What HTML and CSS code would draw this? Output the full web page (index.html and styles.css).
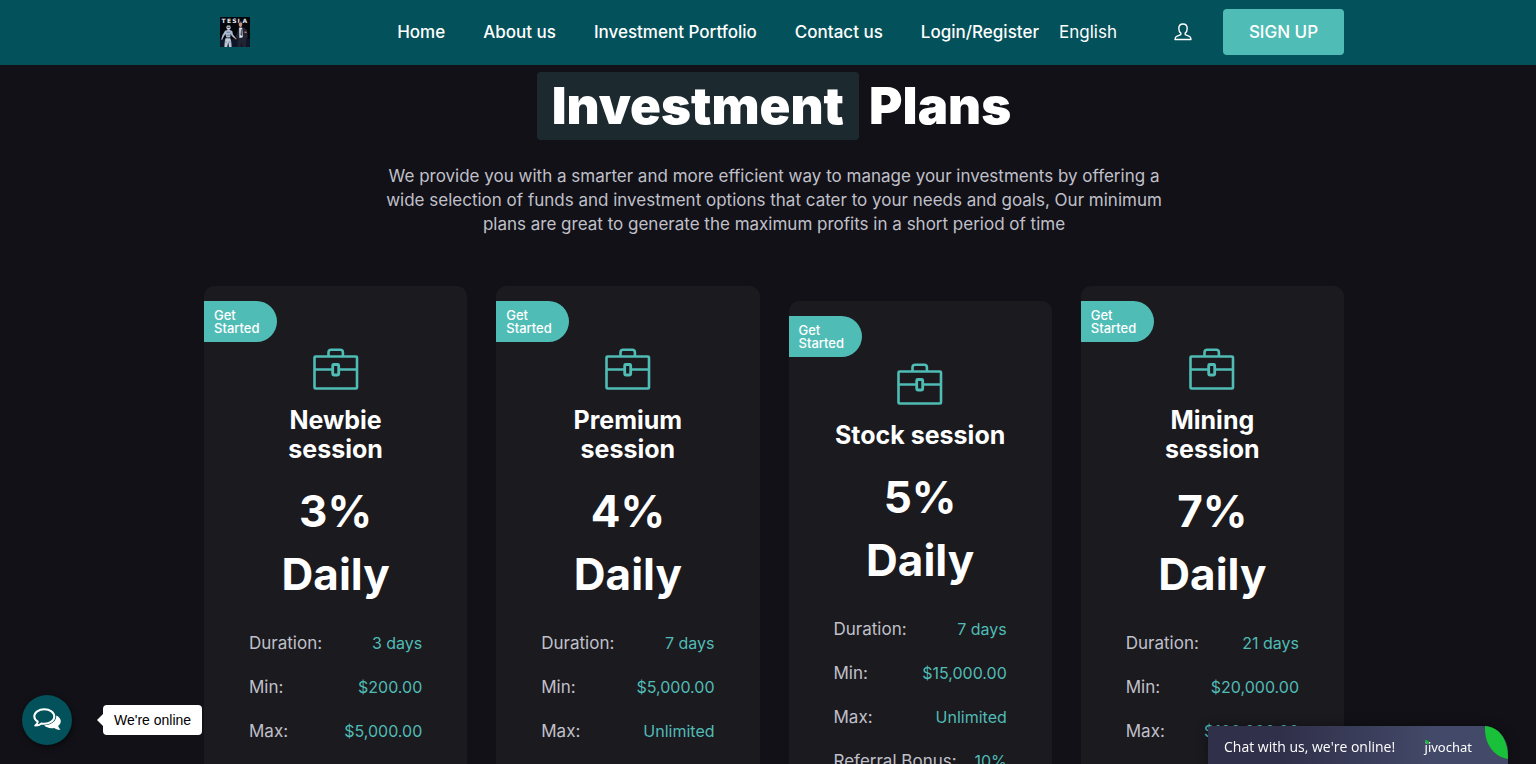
FILE: index.html
```html
<!DOCTYPE html>
<html lang="en">
<head>
<meta charset="utf-8">
<meta name="viewport" content="width=device-width, initial-scale=1">
<title>Investment Plans</title>
<link rel="stylesheet" href="styles.css">
</head>
<body>
<svg class="sprite" aria-hidden="true">
  <symbol id="briefcase" viewBox="0 0 46 42">
    <g fill="none" stroke="currentColor" stroke-width="2.6" stroke-linejoin="round">
      <rect x="1.500" y="8.500" width="42.500" height="32" rx="1"/>
      <path d="M15.500 8V4.500q0-2.700 2.700-2.700h9q2.700 0 2.700 2.700V8M2 21.500h17.500M26 21.500H44"/>
      <path d="M20.700 16.500h4q1 0 1 1v8.500q0 1-1 1h-4q-1 0-1-1v-8.500q0-1 1-1z" stroke-width="2.800"/>
    </g>
  </symbol>
</svg>

<header class="site-header">
  <div class="container header-row">
    <a class="logo" href="#" aria-label="Tesla">
      <svg viewBox="0 0 30 30" width="30" height="30" aria-hidden="true">
        <rect width="30" height="30" fill="#05060b"/>
        <path d="M0 22h30v8H0z" fill="#10162a"/>
        <text class="logo-word" x="1.5 7 12.3 17.6 22.6" y="5.5">TESLA</text>
        <path d="M7.2 8.4h2.6l.9 1.600-.5 2.200-1.600.8-1.700-.8-.6-2.200z" fill="#cbd5e2"/>
        <path d="M7.400 9.600h2.300v1.300H7.400z" fill="#343f52"/>
        <path d="M5 13.800l2.400-.8h2.400l2.400.9.8 3.600 2.400 3.100-1 1-3-3-.8-2-.3 3.800-4 .1-.9-3.600-1.800 3L2 23l-.8-.8 1.200-4z" fill="#aab9cf"/>
        <path d="M5.500 21.300h4.800l1 3.600.3 5.100H9l-.8-5.100-1 5.100H4.400l.3-5z" fill="#bdc9d9"/>
        <path d="M6.600 15.300h3.500M6.400 18.300h3.400M5.200 25h1.600M9 25h1.700" stroke="#56657d" stroke-width=".7"/>
        <path d="M18.400 11l3-1 3.200 1 2.400 2 .8 7-1.400 2.600-.5 7.400h-3.400l-.9-5-1 5h-3l.2-8.500-2-1.200z" fill="#202331"/>
        <path d="M19.200 10.600l3 .1.600 9.600-3.400.7z" fill="#e2e7ef"/>
        <path d="M20.900 12h.6l.3 6-.6 1-.6-1z" fill="#171b2b"/>
        <path d="M18.700 5.500l1.300-.9 1.800.4.5 1.900-.6 2.500-1.400.8-1.400-1.400z" fill="#c59482"/>
        <path d="M18.200 5.900l1.300-1.300 2.200.1.900 1.300-2-.4z" fill="#392a2b"/>
        <path d="M24.500 14.400l2.300.4-.2 1.200-2.100.1zM15 20.600l1.500.4-.2 1.500-1.500-.5z" fill="#bd806e"/>
      </svg>
    </a>
    <nav class="nav" aria-label="Main">
      <a href="#">Home</a>
      <a href="#">About us</a>
      <a href="#">Investment Portfolio</a>
      <a href="#">Contact us</a>
      <a href="#">Login/Register</a>
    </nav>
    <select class="language" aria-label="Language"><option>English</option></select>
    <a class="account" href="#" aria-label="My account">
      <svg viewBox="0 0 18 18" width="18" height="18" aria-hidden="true">
        <path d="M9 1C6.300 1 4.800 2.900 4.800 5.500c0 2 .8 3.700 2 4.600v1.500L2.600 13.300C1.600 13.700 1.200 14.500 1 16.500h16c-.2-2-.6-2.800-1.600-3.200l-4.200-1.700v-1.500c1.200-.9 2-2.600 2-4.600C13.200 2.900 11.700 1 9 1z" fill="none" stroke="currentColor" stroke-width="1.400" stroke-linejoin="round"/>
      </svg>
    </a>
    <a class="signup" href="#">SIGN UP</a>
  </div>
</header>

<main class="container">
  <section class="intro">
    <h1><span class="mark">Investment</span> Plans</h1>
    <p>We provide you with a smarter and more efficient way to manage your investments by offering a wide selection of funds and investment options that cater to your needs and goals, Our minimum plans are great to generate the maximum profits in a short period of time</p>
  </section>

  <section class="plans" aria-label="Plans">
    <article class="plan">
      <a class="ribbon" href="#">Get Started</a>
      <svg class="plan-icon" aria-hidden="true"><use href="#briefcase"/></svg>
      <h2>Newbie session</h2>
      <p class="rate">3% Daily</p>
      <dl>
        <div><dt>Duration:</dt><dd>3 days</dd></div>
        <div><dt>Min:</dt><dd>$200.00</dd></div>
        <div><dt>Max:</dt><dd>$5,000.00</dd></div>
        <div><dt>Referral Bonus:</dt><dd>10%</dd></div>
      </dl>
    </article>
    <article class="plan">
      <a class="ribbon" href="#">Get Started</a>
      <svg class="plan-icon" aria-hidden="true"><use href="#briefcase"/></svg>
      <h2>Premium session</h2>
      <p class="rate">4% Daily</p>
      <dl>
        <div><dt>Duration:</dt><dd>7 days</dd></div>
        <div><dt>Min:</dt><dd>$5,000.00</dd></div>
        <div><dt>Max:</dt><dd>Unlimited</dd></div>
        <div><dt>Referral Bonus:</dt><dd>10%</dd></div>
      </dl>
    </article>
    <article class="plan">
      <a class="ribbon" href="#">Get Started</a>
      <svg class="plan-icon" aria-hidden="true"><use href="#briefcase"/></svg>
      <h2>Stock session</h2>
      <p class="rate">5% Daily</p>
      <dl>
        <div><dt>Duration:</dt><dd>7 days</dd></div>
        <div><dt>Min:</dt><dd>$15,000.00</dd></div>
        <div><dt>Max:</dt><dd>Unlimited</dd></div>
        <div><dt>Referral Bonus:</dt><dd>10%</dd></div>
      </dl>
    </article>
    <article class="plan">
      <a class="ribbon" href="#">Get Started</a>
      <svg class="plan-icon" aria-hidden="true"><use href="#briefcase"/></svg>
      <h2>Mining session</h2>
      <p class="rate">7% Daily</p>
      <dl>
        <div><dt>Duration:</dt><dd>21 days</dd></div>
        <div><dt>Min:</dt><dd>$20,000.00</dd></div>
        <div><dt>Max:</dt><dd>$100,000.00</dd></div>
        <div><dt>Referral Bonus:</dt><dd>10%</dd></div>
      </dl>
    </article>
  </section>
</main>

<div class="online">
  <button class="online-button" type="button" aria-label="Open chat">
    <svg viewBox="0 0 28 24" width="28" height="24" aria-hidden="true">
      <path d="M23.300 7.500c2.700 1.300 4.500 3.300 4.500 5.700 0 1.800-1 3.400-2.600 4.600.2 1.600 1 2.600 2.500 3.800-2.700.3-4.700-.4-6.400-1.700-4.200.9-8.100-.3-10.300-2.600 6.700-.2 12.400-3.800 12.300-9.800z" fill="currentColor"/>
      <path d="M11.300 1.300c5.600 0 10 3.200 10 7.200s-4.400 7.200-10 7.200c-1 0-2-.1-2.900-.3-1.700 1.500-3.600 2.200-6.100 2.100 1.500-1.200 2.300-2.400 2.500-3.900C2.700 12.300 1.300 10.500 1.300 8.500c0-4 4.400-7.200 10-7.200z" fill="#03515a" stroke="#03515a" stroke-width="3"/>
      <path d="M11.300 1.300c5.600 0 10 3.200 10 7.200s-4.400 7.200-10 7.200c-1 0-2-.1-2.900-.3-1.700 1.500-3.600 2.200-6.100 2.100 1.500-1.200 2.300-2.400 2.500-3.900C2.700 12.300 1.300 10.500 1.300 8.500c0-4 4.400-7.200 10-7.200z" fill="none" stroke="currentColor" stroke-width="2" stroke-linejoin="round"/>
    </svg>
  </button>
  <span class="online-tip">We're online</span>
</div>

<button class="chat" type="button">
  <span>Chat with us, we're online!</span>
  <span class="chat-brand"><svg class="brand-dot" viewBox="0 0 4 4" width="4" height="4" aria-hidden="true"><path d="M0 0q4 0 4 4-4 0-4-4z" fill="#18c139"/></svg>jivochat</span>
  <svg class="chat-leaf" viewBox="0 0 23 33" width="23" height="33" aria-hidden="true"><path d="M0 0C15 1 23 14 23 33 9 31-1 18 0 0z" fill="#18c139"/></svg>
</button>
</body>
</html>
```

FILE: styles.css
```css
* {
  box-sizing: border-box;
}

body {
  margin: 0;
  height: 100vh;
  overflow: hidden;
  background: #121117;
  color: #fff;
  font-family: Inter, "Open Sans", sans-serif;
  font-size: 17px;
  line-height: 24px;
}

a {
  color: inherit;
  text-decoration: none;
}

.sprite {
  position: absolute;
  width: 0;
  height: 0;
}

.site-header,
main {
  padding-left: 12px;
}

.container {
  max-width: 1152px;
  margin: 0 auto;
}

.site-header {
  background: #03515a;
}

.header-row {
  display: flex;
  align-items: center;
  max-width: 1140px;
  height: 65px;
  padding: 0 0 1px 16px;
}

.logo {
  display: flex;
  margin-right: auto;
}

.logo-word {
  fill: #e4e8ee;
  font: bold 6px "DejaVu Sans", sans-serif;
}

.nav {
  display: flex;
  gap: 38px;
  font-weight: 500;
}

.language {
  appearance: none;
  width: 92px;
  margin-left: 20px;
  padding: 0;
  border: 0;
  background: none;
  color: #fff;
  font: inherit;
}

.account {
  display: flex;
  margin: 0 31px 0 23px;
}

.signup {
  width: 121px;
  border-radius: 4px;
  background: #50bcb6;
  font-weight: 500;
  line-height: 46px;
  text-align: center;
}

.intro {
  max-width: 800px;
  margin: 0 auto;
  padding-top: 7px;
  text-align: center;
}

h1 {
  margin: 0;
  font-size: 51px;
  font-weight: 900;
  line-height: 68px;
}

.mark {
  display: inline-block;
  padding: 0 15px;
  border-radius: 4px;
  background: #1c2a2f;
}

.intro p {
  margin: 24px 0 0;
  color: #c0c0ca;
}

.plans {
  display: grid;
  grid-template-columns: repeat(4, 1fr);
  gap: 29px;
  align-items: center;
  margin-top: 50px;
}

.plan {
  position: relative;
  padding: 62px 45px 40px;
  border-radius: 10px;
  background: #1b1a1f;
  text-align: center;
}

.ribbon {
  position: absolute;
  top: 15px;
  left: 0;
  width: 73px;
  padding: 8px 10px 7px;
  border-radius: 0 21px 21px 0;
  background: #50bcb6;
  font-size: 13px;
  font-weight: 500;
  line-height: 13px;
  text-align: left;
}

.plan-icon {
  display: block;
  width: 46px;
  height: 42px;
  margin: 0 auto 16px;
  color: #50bcb6;
}

.plan h2 {
  margin: 0;
  font-size: 25px;
  font-weight: 700;
  line-height: 29px;
}

.rate {
  max-width: 120px;
  margin: 16px auto 25px;
  font-size: 44px;
  font-weight: 700;
  line-height: 63px;
}

dl {
  display: grid;
  gap: 20px;
  margin: 0;
}

dl div {
  display: flex;
  justify-content: space-between;
  white-space: nowrap;
}

dt {
  color: #c0c0ca;
}

dd {
  margin: 0;
  color: #50bcb6;
  font-size: 16px;
}

.online {
  position: fixed;
  bottom: 19px;
  left: 22px;
  display: flex;
  align-items: center;
  gap: 31px;
}

.online-button {
  display: grid;
  place-items: center;
  width: 50px;
  height: 50px;
  padding: 0;
  border: 0;
  border-radius: 50%;
  background: #03515a;
  box-shadow: 1px 2px 6px #0008;
  color: #fff;
}

.online-tip {
  position: relative;
  padding: 0 11px;
  border-radius: 4px;
  background: #fff;
  color: #000;
  font-family: "Liberation Sans", Arial, sans-serif;
  font-size: 14px;
  line-height: 30px;
}

.online-tip::before {
  content: "";
  position: absolute;
  top: 9px;
  left: -6px;
  border: 6px solid transparent;
  border-left: 0;
  border-right-color: #fff;
}

.chat {
  position: fixed;
  right: 28px;
  bottom: 0;
  display: flex;
  align-items: center;
  justify-content: space-between;
  width: 300px;
  height: 38px;
  padding: 3px 36px 0 16px;
  border: 0;
  border-radius: 4px 26px 0 0;
  background: linear-gradient(90deg, #30304a 25%, #434968 75%);
  box-shadow: 0 0 12px #0006;
  color: #fff;
  font-family: "Open Sans", "Noto Sans", sans-serif;
  font-size: 14px;
}

.chat-brand {
  position: relative;
  font-family: "Noto Sans", sans-serif;
  font-size: 13px;
}

.brand-dot {
  position: absolute;
  top: 2px;
  left: 0;
}

.chat-leaf {
  position: absolute;
  top: 0;
  right: 0;
}
```
